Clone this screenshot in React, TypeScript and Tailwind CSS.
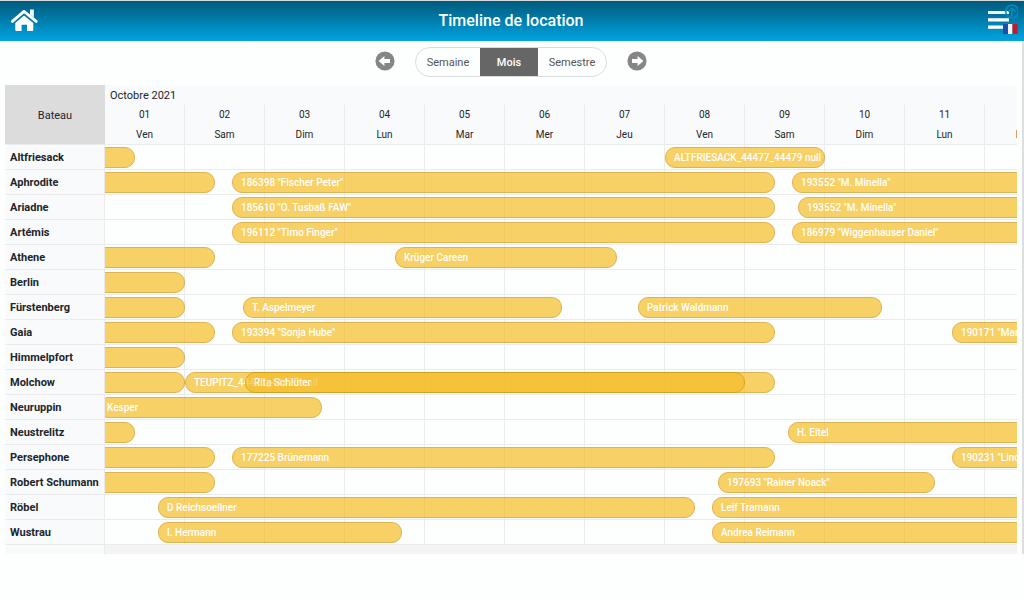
import { useState } from 'react'
import clsx from 'clsx'

const DAY_WIDTH = 80

const DAYS = [
  { date: '01', name: 'Ven' },
  { date: '02', name: 'Sam' },
  { date: '03', name: 'Dim' },
  { date: '04', name: 'Lun' },
  { date: '05', name: 'Mar' },
  { date: '06', name: 'Mer' },
  { date: '07', name: 'Jeu' },
  { date: '08', name: 'Ven' },
  { date: '09', name: 'Sam' },
  { date: '10', name: 'Dim' },
  { date: '11', name: 'Lun' },
  { date: '12', name: 'Mar' },
]

// start / end are offsets in px from the first of the month
type Booking = { start: number; end: number; label?: string }
type Boat = { name: string; bookings: Booking[] }

const BOATS: Boat[] = [
  {
    name: 'Altfriesack',
    bookings: [
      { start: -50, end: 30 },
      { start: 560, end: 720, label: 'ALTFRIESACK_44477_44479 null' },
    ],
  },
  {
    name: 'Aphrodite',
    bookings: [
      { start: -50, end: 110 },
      { start: 127, end: 670, label: '186398 "Fischer Peter"' },
      { start: 687, end: 1100, label: '193552 "M. Minella"' },
    ],
  },
  {
    name: 'Ariadne',
    bookings: [
      { start: 127, end: 670, label: '185610 "O. Tusbaß FAW"' },
      { start: 693, end: 1100, label: '193552 "M. Minella"' },
    ],
  },
  {
    name: 'Artémis',
    bookings: [
      { start: 127, end: 670, label: '196112 "Timo Finger"' },
      { start: 687, end: 1100, label: '186979 "Wiggenhauser Daniel"' },
    ],
  },
  {
    name: 'Athene',
    bookings: [
      { start: -50, end: 110 },
      { start: 290, end: 512, label: 'Krüger Careen' },
    ],
  },
  { name: 'Berlin', bookings: [{ start: -50, end: 80 }] },
  {
    name: 'Fürstenberg',
    bookings: [
      { start: -50, end: 80 },
      { start: 138, end: 457, label: 'T. Aspelmeyer' },
      { start: 533, end: 777, label: 'Patrick Waldmann' },
    ],
  },
  {
    name: 'Gaia',
    bookings: [
      { start: -50, end: 110 },
      { start: 127, end: 670, label: '193394 "Sonja Hube"' },
      { start: 847, end: 1100, label: '190171 "Markus"' },
    ],
  },
  { name: 'Himmelpfort', bookings: [{ start: -50, end: 80 }] },
  {
    name: 'Molchow',
    bookings: [
      { start: -50, end: 80 },
      { start: 80, end: 670, label: 'TEUPITZ_44471_44478 null' },
      { start: 140, end: 640, label: 'Rita Schlüter' },
    ],
  },
  { name: 'Neuruppin', bookings: [{ start: -7, end: 217, label: 'Kesper' }] },
  {
    name: 'Neustrelitz',
    bookings: [
      { start: -50, end: 30 },
      { start: 683, end: 1100, label: 'H. Eitel' },
    ],
  },
  {
    name: 'Persephone',
    bookings: [
      { start: -50, end: 110 },
      { start: 127, end: 670, label: '177225 Brünemann' },
      { start: 847, end: 1100, label: '190231 "Linomar"' },
    ],
  },
  {
    name: 'Robert Schumann',
    bookings: [
      { start: -50, end: 110 },
      { start: 613, end: 830, label: '197693 "Rainer Noack"' },
    ],
  },
  {
    name: 'Röbel',
    bookings: [
      { start: 53, end: 590, label: 'D Reichsoellner' },
      { start: 607, end: 1100, label: 'Leif Tramann' },
    ],
  },
  {
    name: 'Wustrau',
    bookings: [
      { start: 53, end: 297, label: 'I. Hermann' },
      { start: 607, end: 1100, label: 'Andrea Reimann' },
    ],
  },
]

const VIEWS = [
  { id: 'week', label: 'Semaine', width: 'w-16' },
  { id: 'month', label: 'Mois', width: 'w-[58px]' },
  { id: 'semester', label: 'Semestre', width: 'w-[68px]' },
]

function HomeIcon() {
  return (
    <svg width="28" height="24" viewBox="0 0 28 24" fill="none" className="block shrink-0">
      <path
        d="M2.400 12.400 L14 2.400 L26.200 12.400"
        stroke="white"
        strokeWidth="2.8"
        strokeLinecap="round"
        strokeLinejoin="round"
      />
      <path
        d="M20 0.600h3.800v8l-3.800-3.200z M14 6.400l9.300 7.600v7c0 .6-.4 1-1 1h-5.300v-6.200h-5.400v6.200H6.300c-.6 0-1-.4-1-1v-7z"
        fill="white"
      />
    </svg>
  )
}

function MenuIcon() {
  return (
    <svg width="30" height="34" viewBox="0 0 30 34" className="block shrink-0">
      <path d="M0 7h21v3H0z M0 14.300h21v3.200H0z M0 21.500h21v3.200H0z" fill="white" />
      <g fill="none" stroke="#0789bd" strokeOpacity="0.85" strokeWidth="2">
        <circle cx="24" cy="7.5" r="6.3" />
        <path d="M24 12V4.500 M20.500 7.800 L24 4.300 L27.500 7.800" />
      </g>
      <path d="M15 20h5v10h-5z" fill="#1d4fa8" />
      <path d="M20 20h4.500v10H20z" fill="#f4f4f4" />
      <path d="M24.500 20h5v10h-5z" fill="#c01a2e" />
    </svg>
  )
}

function ArrowButton({ direction }: { direction: 'left' | 'right' }) {
  return (
    <button
      type="button"
      aria-label={direction === 'left' ? 'Précédent' : 'Suivant'}
      className="pb-[2px]"
    >
      <svg
        width="20"
        height="20"
        viewBox="0 0 20 20"
        className={clsx('block', direction === 'right' && 'rotate-180')}
      >
        <circle cx="10" cy="10" r="9.6" fill="#868686" />
        <path d="M3.600 10l5.800-5v2.900H15v4.200H9.400V15z" fill="white" />
      </svg>
    </button>
  )
}

function BookingBar({ booking }: { booking: Booking }) {
  return (
    <div
      className="absolute top-[2px] h-[21px] rounded-[10px] border border-[#d0940c] bg-[#f5bd26] px-2 text-[10px] leading-[19px] font-medium text-white whitespace-nowrap opacity-70"
      style={{ left: booking.start, width: booking.end - booking.start }}
    >
      {booking.label}
    </div>
  )
}

function BoatRow({ boat }: { boat: Boat }) {
  return (
    <tr>
      <th
        scope="row"
        className="h-[25px] border-r border-b border-[#ebebeb] bg-[#f9fafc] p-0 pt-[2px] pl-[5px] text-left font-bold whitespace-nowrap"
      >
        {boat.name}
      </th>
      <td colSpan={DAYS.length} className="border-b border-[#ebebeb] p-0">
        <div className="relative h-6 overflow-hidden">
          <div className="flex h-full">
            {DAYS.map((day) => (
              <div key={day.date} className="flex-1 border-r border-[#ebebeb]" />
            ))}
          </div>
          {boat.bookings.map((booking) => (
            <BookingBar key={booking.start} booking={booking} />
          ))}
        </div>
      </td>
    </tr>
  )
}

export default function App() {
  const [view, setView] = useState('month')

  return (
    <div className="min-h-screen bg-[#fdfefe] font-[Roboto,'Liberation_Sans',sans-serif] text-[11px] leading-4 text-[#212529]">
      <header className="flex h-[41px] items-center justify-between border-t border-[#d5dcdf] bg-linear-to-b from-[#005a7c] to-[#00a5e2] pl-[10px] pr-[6px]">
        <a href="#" aria-label="Accueil" className="w-7">
          <HomeIcon />
        </a>
        <h1 className="text-base font-medium text-white">Timeline de location</h1>
        <button type="button" aria-label="Menu" className="flex w-[34px] justify-end">
          <MenuIcon />
        </button>
      </header>

      <main className="border-r-2 border-[#dedede] pl-[5px] pr-[5px]">
        {/* Period navigation */}
        <nav className="flex h-11 items-center justify-center gap-5 pb-[2px]">
          <ArrowButton direction="left" />
          <div className="flex h-[30px] overflow-hidden rounded-full border border-[#dadce0]">
            {VIEWS.map((item) => (
              <button
                key={item.id}
                type="button"
                onClick={() => setView(item.id)}
                className={clsx(
                  item.width,
                  'pt-[2px]',
                  view === item.id ? 'bg-[#666666] font-medium text-white' : 'text-[#555555]',
                )}
              >
                {item.label}
              </button>
            ))}
          </div>
          <ArrowButton direction="right" />
        </nav>

        {/* Timeline */}
        <div className="overflow-hidden">
          <table
            className="table-fixed border-separate border-spacing-0"
            style={{ width: 100 + DAYS.length * DAY_WIDTH }}
          >
            <colgroup>
              <col className="w-[100px]" />
              {DAYS.map((day) => (
                <col key={day.date} className="w-20" />
              ))}
            </colgroup>
            <thead className="bg-[#f9fafc]">
              <tr>
                <th
                  rowSpan={3}
                  scope="col"
                  className="border-b border-[#ebebeb] bg-[#dcdcdc] bg-clip-padding p-0 pt-[2px] font-normal"
                >
                  Bateau
                </th>
                <th
                  colSpan={DAYS.length}
                  className="h-5 p-0 pt-[2px] pl-[5px] text-left font-normal"
                >
                  Octobre 2021
                </th>
              </tr>
              <tr>
                {DAYS.map((day) => (
                  <th
                    key={day.date}
                    className="h-5 border-r border-[#ebebeb] p-0 text-[10px] font-normal"
                  >
                    {day.date}
                  </th>
                ))}
              </tr>
              <tr>
                {DAYS.map((day) => (
                  <th
                    key={day.date}
                    className="h-5 border-r border-b border-[#ebebeb] p-0 text-[10px] font-normal"
                  >
                    {day.name}
                  </th>
                ))}
              </tr>
            </thead>
            <tbody>
              {BOATS.map((boat) => (
                <BoatRow key={boat.name} boat={boat} />
              ))}
            </tbody>
          </table>
          <div className="flex h-[9px]">
            <div className="w-[100px] border-r border-[#ebebeb] bg-[#f9fafc]" />
            <div className="flex-1 bg-[#f4f4f4]" />
          </div>
        </div>
      </main>
    </div>
  )
}
